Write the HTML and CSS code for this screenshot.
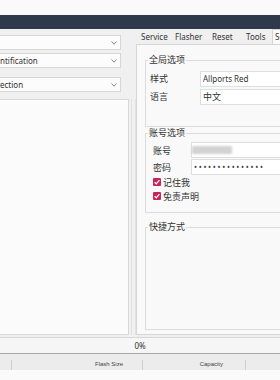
FILE: index.html
```html
<!DOCTYPE html>
<html lang="zh">
<head>
<meta charset="utf-8">
<link rel="stylesheet" href="styles.css">
</head>
<body>
<div class="top"></div>
<div class="titlebar"></div>
<div class="main">
  <div class="left">
    <div class="combo c1"><span class="ctext"></span><svg class="chev" width="6" height="4" viewBox="0 0 6 4"><polyline points="0.5,0.5 3,3.2 5.5,0.5"/></svg></div>
    <div class="combo c2"><span class="ctext">ntification</span><svg class="chev" width="6" height="4" viewBox="0 0 6 4"><polyline points="0.5,0.5 3,3.2 5.5,0.5"/></svg></div>
    <div class="combo c3"><span class="ctext">ection</span><svg class="chev" width="6" height="4" viewBox="0 0 6 4"><polyline points="0.5,0.5 3,3.2 5.5,0.5"/></svg></div>
    <div class="list"></div>
  </div>
  <div class="splitter"></div>
  <div class="right">
    <div class="tabs">
      <div class="tab">Service</div>
      <div class="tab">Flasher</div>
      <div class="tab">Reset</div>
      <div class="tab">Tools</div>
      <div class="tab active">Settings</div>
    </div>
    <div class="panel">
      <fieldset class="group g1">
        <legend>全局选项</legend>
        <div class="form1">
          <span class="lbl">样式</span><div class="field">Allports Red</div>
          <span class="lbl">语言</span><div class="field cjk">中文</div>
        </div>
      </fieldset>
      <fieldset class="group g2">
        <legend>账号选项</legend>
        <div class="form2">
          <span class="lbl">账号</span><div class="field"><span class="redacted"></span></div>
          <span class="lbl">密码</span><div class="field pw">•••••••••••••••</div>
        </div>
        <div class="check"><svg class="box" width="8" height="8" viewBox="0 0 8 8"><rect width="8" height="8" rx="1"/><polyline points="1.6,4.2 3.3,5.8 6.4,2.2"/></svg><span>记住我</span></div>
        <div class="check"><svg class="box" width="8" height="8" viewBox="0 0 8 8"><rect width="8" height="8" rx="1"/><polyline points="1.6,4.2 3.3,5.8 6.4,2.2"/></svg><span>免责声明</span></div>
      </fieldset>
      <fieldset class="group g3">
        <legend>快捷方式</legend>
      </fieldset>
    </div>
  </div>
</div>
<div class="progress">0%</div>
<div class="status">
  <div class="cell"></div>
  <div class="cell">Flash Size</div>
  <div class="cell">Capacity</div>
  <div class="cell last"></div>
</div>
<div class="footer"></div>
</body>
</html>
```
FILE: styles.css
```css
html, body {
  margin: 0;
  padding: 0;
}
body {
  width: 280px;
  height: 380px;
  overflow: hidden;
  background: #f0f0f0;
  font-family: "Noto Sans", "Noto Sans CJK SC", sans-serif;
  font-size: 8px;
  color: #333;
}
.top {
  height: 15px;
  background: #fafafa;
}
.titlebar {
  height: 14px;
  background: #2e3a4b;
}
.main {
  display: flex;
  height: 307px;
}
.left {
  width: 129px;
  flex-shrink: 0;
  display: flex;
  flex-direction: column;
  padding-top: 6px;
  box-sizing: border-box;
}
.combo {
  width: 121px;
  height: 15px;
  box-sizing: border-box;
  border: 1px solid #d6d6d6;
  border-left: none;
  background: #fcfcfc;
  display: flex;
  align-items: center;
  justify-content: space-between;
  padding-right: 3px;
  line-height: 13px;
}
.c1 { margin-bottom: 3px; }
.c2 { margin-bottom: 9px; }
.c3 { margin-bottom: 7px; }
.chev polyline {
  fill: none;
  stroke: #777;
  stroke-width: 0.9;
}
.list {
  flex: 1;
  margin-bottom: 1px;
  border: 1px solid #d8d8d8;
  border-left: none;
  background: #fbfbfb;
}
.splitter {
  width: 7px;
  flex-shrink: 0;
  margin-top: 70px;
  margin-bottom: 1px;
  box-sizing: border-box;
  border-left: 3px solid transparent;
  background: linear-gradient(to right, #f0f0f0 0, #f0f0f0 3px, #e2e2e2 3px, #e2e2e2 4px, #f0f0f0 4px);
}
.right {
  width: 200px;
  flex-shrink: 0;
  display: flex;
  flex-direction: column;
}
.tabs {
  display: grid;
  grid-template-columns: 34px 37px 34px 29px 1fr;
  padding-left: 2px;
  height: 15px;
  box-sizing: border-box;
  padding-top: 1px;
}
.tab {
  padding-left: 3px;
  line-height: 14px;
  white-space: nowrap;
  color: #333;
}
.tab.active {
  padding-left: 2px;
  background: #fafafa;
  border-left: 1px solid #d4d4d4;
  border-top: 1px solid #d4d4d4;
  margin-top: -1px;
  line-height: 14px;
}
.panel {
  flex: 1;
  display: flex;
  flex-direction: column;
  margin-bottom: 1px;
  border: 1px solid #d6d6d6;
  border-right: none;
  background: #f9f9f9;
  padding: 9px 0 0 8px;
}
.group {
  margin: 0;
  width: 191px;
  box-sizing: border-box;
  border: 1px solid #dcdcdc;
  border-right: none;
  padding: 0 0 0 2px;
  min-width: 0;
}
.group legend {
  padding: 0 1px;
  font-size: 9px;
  line-height: 12px;
  color: #333;
  font-family: "Noto Sans CJK SC", sans-serif;
}
.g1 { padding-top: 5px; padding-bottom: 21px; }
.g2 { padding-top: 3px; padding-bottom: 9px; }
.g3 { flex: 1; margin-top: 8px; margin-bottom: 4px; }
.form1 {
  display: grid;
  grid-template-columns: 50px 1fr;
  row-gap: 2px;
  margin-left: 2px;
}
.form2 {
  display: grid;
  grid-template-columns: 38px 1fr;
  row-gap: 1px;
  margin-left: 5px;
  align-items: center;
}
.lbl {
  font-family: "Noto Sans CJK SC", sans-serif;
  font-size: 9px;
  line-height: 15px;
  color: #333;
}
.field {
  height: 16px;
  box-sizing: border-box;
  border: 1px solid #dedede;
  border-right: none;
  background: #fff;
  padding-left: 2px;
  line-height: 14px;
  font-size: 8px;
  color: #333;
  display: flex;
  align-items: center;
  white-space: nowrap;
}
.field.cjk {
  font-family: "Noto Sans CJK SC", sans-serif;
  font-size: 9px;
}
.redacted {
  display: inline-block;
  width: 40px;
  height: 8px;
  margin-left: -2px;
  background: #d2d2d2;
  filter: blur(0.8px);
}
.pw {
  letter-spacing: 1.7px;
  font-size: 8px;
  color: #444;
}
.check {
  display: flex;
  align-items: center;
  height: 14px;
  margin-left: 5px;
  font-family: "Noto Sans CJK SC", sans-serif;
  font-size: 9px;
  color: #333;
}
.check:first-of-type { margin-top: 2px; }
.box {
  margin-right: 2px;
  flex-shrink: 0;
}
.box rect { fill: #c8245c; }
.box polyline {
  fill: none;
  stroke: #fff;
  stroke-width: 1.2;
}
.progress {
  margin-top: 1px;
  height: 16px;
  box-sizing: border-box;
  border-top: 1px solid #d6d6d6;
  background: #f6f6f6;
  text-align: center;
  line-height: 15px;
  font-size: 8px;
  color: #333;
}
.status {
  display: grid;
  grid-template-columns: 12px 131px 103px 1fr;
  height: 17px;
  box-sizing: border-box;
  border-top: 1px solid #a8a8a8;
  background: #ececec;
  font-family: "Liberation Sans", sans-serif;
  font-size: 6px;
  color: #444;
}
.cell {
  border-right: 1px solid #cfcfcf;
  margin: 6px 0 0;
  line-height: 9px;
  text-align: right;
}
.cell:nth-child(2) { padding-right: 19px; }
.cell:nth-child(3) { padding-right: 22px; }
.cell.last { border-right: none; }
.footer {
  height: 10px;
  background: #fafafa;
}
```
